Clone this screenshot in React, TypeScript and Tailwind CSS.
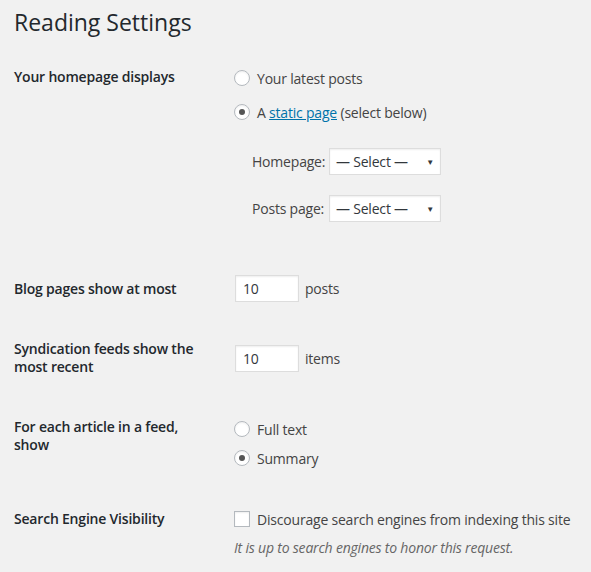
import React from "react";

const font = { fontFamily: '"Open Sans", "Noto Sans", sans-serif' };

function Radio({ checked }: { checked?: boolean }) {
  return (
    <span className="flex h-4 w-4 shrink-0 items-center justify-center rounded-full border border-[#b4b9be] bg-white shadow-[inset_0_1px_2px_rgba(0,0,0,0.07)]">
      {checked && <span className="h-[6px] w-[6px] rounded-full bg-[#555]" />}
    </span>
  );
}

function SelectBox() {
  return (
    <div className="flex h-[27px] w-[112px] items-center justify-between border border-[#ddd] bg-white pl-[6px] pr-[6px] text-[14px] text-[#32373c] shadow-[inset_0_1px_2px_rgba(0,0,0,0.07)]">
      <span>— Select —</span>
      <span className="text-[8px] text-[#32373c]">▼</span>
    </div>
  );
}

function NumberInput() {
  return (
    <div className="flex h-[27px] w-[64px] items-center border border-[#ddd] bg-white px-[7px] text-[14px] text-[#32373c] shadow-[inset_0_1px_2px_rgba(0,0,0,0.07)]">
      10
    </div>
  );
}

export default function App() {
  return (
    <div className="min-h-[572px] w-[591px] bg-[#f1f1f1] text-[14px] tracking-[-0.2px] text-[#444]" style={font}>
      <h1 className="pl-[14px] pt-[8px] text-[23px] leading-[29px] font-normal tracking-normal text-[#23282d]">
        Reading Settings
      </h1>

      {/* homepage displays */}
      <div className="mt-[31px] grid grid-cols-[220px_1fr] pl-[14px]">
        <div className="text-[14px] font-semibold leading-[18px] text-[#23282d]">Your homepage displays</div>
        <div className="flex flex-col">
          <label className="flex h-5 items-center gap-[7px]">
            <Radio />
            <span>Your latest posts</span>
          </label>
          <label className="mt-[14px] flex h-5 items-center gap-[7px]">
            <Radio checked />
            <span>
              A <a className="text-[#0073aa] underline">static page</a> (select below)
            </span>
          </label>
          <div className="mt-[26px] flex items-center pl-[18px]">
            <span className="w-[77px]">Homepage:</span>
            <SelectBox />
          </div>
          <div className="mt-[20px] flex items-center pl-[18px]">
            <span className="w-[77px]">Posts page:</span>
            <SelectBox />
          </div>
        </div>
      </div>

      {/* blog pages */}
      <div className="mt-[53px] grid grid-cols-[220px_1fr] items-center pl-[14px]">
        <div className="font-semibold leading-[18px] text-[#23282d]">Blog pages show at most</div>
        <div className="flex items-center gap-[6px] pl-[1px]">
          <NumberInput />
          <span>posts</span>
        </div>
      </div>

      {/* syndication */}
      <div className="mt-[38px] grid grid-cols-[220px_1fr] pl-[14px]">
        <div className="font-semibold leading-[18px] text-[#23282d]">
          Syndication feeds show the
          <br />
          most recent
        </div>
        <div className="mt-[1px] flex items-center gap-[6px] pl-[1px]">
          <NumberInput />
          <span>items</span>
        </div>
      </div>

      {/* article in feed */}
      <div className="mt-[43px] grid grid-cols-[220px_1fr] pl-[14px]">
        <div className="-mt-[1px] font-semibold leading-[18px] text-[#23282d]">
          For each article in a feed,
          <br />
          show
        </div>
        <div className="flex flex-col">
          <label className="flex h-5 items-center gap-[7px]">
            <Radio />
            <span>Full text</span>
          </label>
          <label className="mt-[9px] flex h-5 items-center gap-[7px]">
            <Radio checked />
            <span>Summary</span>
          </label>
        </div>
      </div>

      {/* search engine */}
      <div className="mt-[41px] grid grid-cols-[220px_1fr] pl-[14px]">
        <div className="pt-[1px] font-semibold leading-[18px] text-[#23282d]">Search Engine Visibility</div>
        <div className="flex flex-col">
          <label className="flex h-5 items-center gap-[7px]">
            <span className="h-4 w-4 shrink-0 border border-[#b4b9be] bg-white shadow-[inset_0_1px_2px_rgba(0,0,0,0.07)]" />
            <span>Discourage search engines from indexing this site</span>
          </label>
          <p className="mt-[9px] text-[14px] italic leading-[20px] text-[#666]">
            It is up to search engines to honor this request.
          </p>
        </div>
      </div>
    </div>
  );
}
